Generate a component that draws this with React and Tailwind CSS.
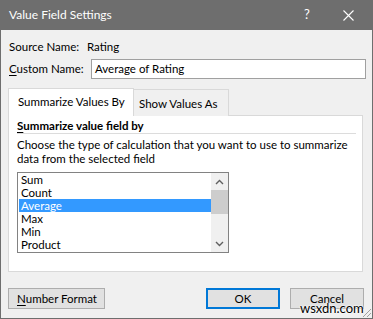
import React from "react";

const font = { fontFamily: 'Lato, "Noto Sans", sans-serif' };

function Chevron({ up }) {
  return (
    <svg width="9" height="6" viewBox="0 0 9 6" className="block">
      <polyline
        points={up ? "1,5 4.5,1.5 8,5" : "1,1 4.5,4.5 8,1"}
        fill="none"
        stroke="#606060"
        strokeWidth="1.4"
      />
    </svg>
  );
}

export default function App() {
  const items = ["Sum", "Count", "Average", "Max", "Min", "Product"];
  return (
    <div
      className="relative w-[373px] h-[319px] bg-[#f0f0f0] border-x border-b border-[#6e6e6e] flex flex-col text-[11.5px] text-black overflow-hidden whitespace-nowrap"
      style={font}
    >
      {/* title bar */}
      <div className="h-[30px] bg-[#6e6e6e] flex items-center pl-[8px] text-white text-[12px] shrink-0">
        <span className="flex-1">Value Field Settings</span>
        <span className="w-[20px] text-center text-[13px] mr-[26px]">?</span>
        <svg width="11" height="11" viewBox="0 0 11 11" className="mr-[18px]">
          <path d="M0.5 0.5 L10.5 10.5 M10.5 0.5 L0.5 10.5" stroke="#fff" strokeWidth="1.1" />
        </svg>
      </div>

      <div className="flex flex-col pl-[7px] pr-[6px]">
        {/* source name */}
        <div className="flex items-center h-[16px] mt-[9px] pl-[1px]">
          <span className="w-[78px]">Source Name:</span>
          <span>Rating</span>
        </div>
        {/* custom name */}
        <div className="flex items-center mt-[4px] pl-[1px]">
          <span className="w-[82px]">
            <span className="underline underline-offset-2">C</span>ustom Name:
          </span>
          <div className="flex-1 h-[20px] bg-white border border-[#a0a0a0] flex items-center pl-[3px]">
            Average of Rating
          </div>
        </div>

        {/* tabs */}
        <div className="flex items-end h-[28px] mt-[9px] relative z-10">
          <div className="w-[126px] h-[28px] bg-white border border-b-0 border-[#d9d9d9] flex items-center pl-[9px] pb-[2px]">
            Summarize Values By
          </div>
          <div className="w-[95px] h-[27px] bg-[#f0f0f0] border border-l-0 border-b-0 border-[#d9d9d9] flex items-center pl-[5px] pt-[1px]">
            Show Values As
          </div>
        </div>

        {/* panel */}
        <div className="h-[157px] -mt-[1px] bg-white border border-[#d9d9d9] mr-[3px] flex flex-col pl-[8px] pr-[6px]">
          <div className="h-[14px] mt-[3px] font-bold flex items-center">
            <span className="underline underline-offset-2">S</span>ummarize value field by
          </div>
          <div className="h-px bg-[#dcdcdc]" />
          <div className="mt-[4px] leading-[14px]">
            <div>Choose the type of calculation that you want to use to summarize</div>
            <div>data from the selected field</div>
          </div>
          {/* listbox */}
          <div className="mt-[6px] w-[212px] h-[81px] border border-[#828282] flex">
            <div className="flex-1 flex flex-col pl-[1px]">
              {items.map((it) => (
                <div
                  key={it}
                  className={
                    "h-[13px] leading-[13px] pl-[2px] " +
                    (it === "Average" ? "bg-[#3399ff] text-white" : "")
                  }
                >
                  {it}
                </div>
              ))}
            </div>
            <div className="w-[17px] bg-[#f0f0f0] flex flex-col items-center">
              <div className="h-[17px] flex items-center justify-center w-full">
                <Chevron up />
              </div>
              <div className="w-full h-[24px] bg-[#cdcdcd]" />
              <div className="flex-1" />
              <div className="h-[17px] flex items-center justify-center w-full">
                <Chevron />
              </div>
            </div>
          </div>
        </div>

        {/* buttons */}
        <div className="flex mt-[16px] h-[21px]">
          <div className="w-[97px] h-[21px] bg-[#e1e1e1] border border-[#adadad] flex items-center pl-[8px]">
            <span className="underline underline-offset-2">N</span>umber Format
          </div>
          <div className="flex-1" />
          <div className="w-[74px] h-[21px] bg-[#e1e1e1] border-2 border-[#0078d7] flex items-center justify-center">
            OK
          </div>
          <div className="w-[74px] h-[21px] ml-[10px] mr-[2px] bg-[#e1e1e1] border border-[#adadad] flex items-center justify-center">
            Cancel
          </div>
        </div>
      </div>

      {/* watermark */}
      <div
        className="absolute left-[299px] top-[302px] text-[13px] text-black leading-none"
        style={{ textShadow: "0 0 2px #fff, 0 0 2px #fff, 0 0 1px #fff" }}
      >
        wsxdn.com
      </div>
      {/* resize grip */}
      <svg width="12" height="12" viewBox="0 0 12 12" className="absolute right-[0px] bottom-[0px]">
        <path d="M11 3 L3 11 M11 7 L7 11" stroke="#a0a0a0" strokeWidth="1" />
      </svg>
    </div>
  );
}
